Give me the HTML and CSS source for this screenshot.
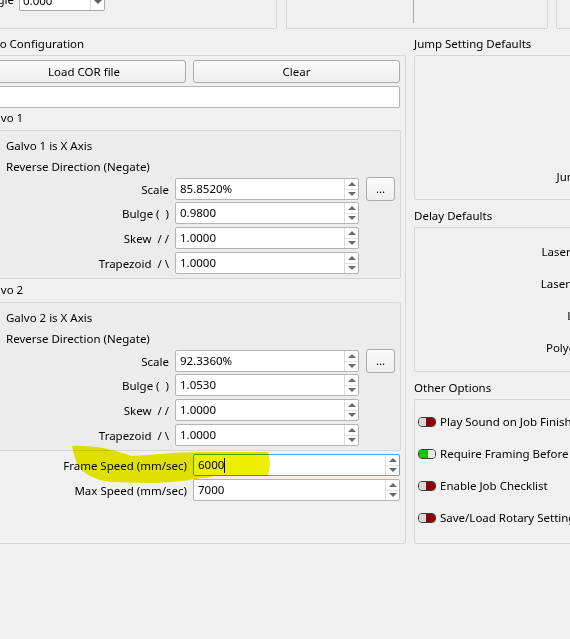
FILE: index.html
```html
<!DOCTYPE html>
<html>
<head>
<meta charset="utf-8">
<link rel="stylesheet" href="styles.css">
</head>
<body>
<div class="page">
  <div class="toprow">
    <div class="tbox tbox1">
      <div class="trow">
        <span class="tlabel">Angle</span>
        <div class="combo"><span class="ctext">0.000</span><span class="carrow"></span></div>
      </div>
    </div>
    <div class="tbox tbox2"><div class="vline"></div></div>
    <div class="tbox tbox3"></div>
  </div>

  <div class="main">
    <div class="lcol">
      <div class="gtitle">Galvo Configuration</div>
      <div class="frame lframe">
        <div class="btnrow">
          <button class="btn">Load COR file</button>
          <button class="btn">Clear</button>
        </div>
        <div class="textfield"></div>

        <div class="stitle">Galvo 1</div>
        <div class="galvo">
          <div class="check">Galvo 1 is X Axis</div>
          <div class="check">Reverse Direction (Negate)</div>
          <div class="grow">
            <span class="glabel">Scale</span>
            <div class="spin"><span class="stext">85.8520%</span><span class="arrows"><span class="up"></span><span class="down"></span></span></div>
            <button class="btn dots">...</button>
          </div>
          <div class="grow">
            <span class="glabel">Bulge (&nbsp;&nbsp;)</span>
            <div class="spin"><span class="stext">0.9800</span><span class="arrows"><span class="up"></span><span class="down"></span></span></div>
          </div>
          <div class="grow">
            <span class="glabel">Skew &nbsp;/ /</span>
            <div class="spin"><span class="stext">1.0000</span><span class="arrows"><span class="up"></span><span class="down"></span></span></div>
          </div>
          <div class="grow">
            <span class="glabel">Trapezoid &nbsp;/ \</span>
            <div class="spin"><span class="stext">1.0000</span><span class="arrows"><span class="up"></span><span class="down"></span></span></div>
          </div>
        </div>

        <div class="stitle s2">Galvo 2</div>
        <div class="galvo">
          <div class="check">Galvo 2 is X Axis</div>
          <div class="check">Reverse Direction (Negate)</div>
          <div class="grow">
            <span class="glabel">Scale</span>
            <div class="spin"><span class="stext">92.3360%</span><span class="arrows"><span class="up"></span><span class="down"></span></span></div>
            <button class="btn dots">...</button>
          </div>
          <div class="grow">
            <span class="glabel">Bulge (&nbsp;&nbsp;)</span>
            <div class="spin"><span class="stext">1.0530</span><span class="arrows"><span class="up"></span><span class="down"></span></span></div>
          </div>
          <div class="grow">
            <span class="glabel">Skew &nbsp;/ /</span>
            <div class="spin"><span class="stext">1.0000</span><span class="arrows"><span class="up"></span><span class="down"></span></span></div>
          </div>
          <div class="grow">
            <span class="glabel">Trapezoid &nbsp;/ \</span>
            <div class="spin"><span class="stext">1.0000</span><span class="arrows"><span class="up"></span><span class="down"></span></span></div>
          </div>
        </div>

        <div class="srow first">
          <span class="glabel">Frame Speed (mm/sec)</span>
          <div class="spin focus"><span class="stext">6000<span class="caret"></span></span><span class="arrows"><span class="up"></span><span class="down"></span></span></div>
        </div>
        <div class="srow">
          <span class="glabel">Max Speed (mm/sec)</span>
          <div class="spin"><span class="stext">7000</span><span class="arrows"><span class="up"></span><span class="down"></span></span></div>
        </div>
      </div>
    </div>

    <div class="rcol">
      <div class="gtitle">Jump Setting Defaults</div>
      <div class="frame jframe">
        <div class="frow"><span class="flabel">Jump Speed</span></div>
      </div>
      <div class="gtitle gap">Delay Defaults</div>
      <div class="frame dframe">
        <div class="frow"><span class="flabel">Laser On Delay</span></div>
        <div class="frow"><span class="flabel">Laser Off Delay</span></div>
        <div class="frow"><span class="flabel">Line Delay</span></div>
        <div class="frow"><span class="flabel">Polygon Delay</span></div>
      </div>
      <div class="gtitle gap">Other Options</div>
      <div class="frame oframe">
        <div class="orow"><span class="toggle off"><span class="a"></span><span class="b"></span></span><span>Play Sound on Job Finish</span></div>
        <div class="orow"><span class="toggle on"><span class="a"></span><span class="b"></span></span><span>Require Framing Before Start</span></div>
        <div class="orow"><span class="toggle off"><span class="a"></span><span class="b"></span></span><span>Enable Job Checklist</span></div>
        <div class="orow"><span class="toggle off"><span class="a"></span><span class="b"></span></span><span>Save/Load Rotary Settings</span></div>
      </div>
    </div>
  </div>
</div>

<svg class="highlight" width="570" height="639" viewBox="0 0 570 639">
  <path d="M72,446 C92,445 112,449 132,456 C152,455 176,452 200,452 L268,452 L270,464 L268,476 L215,476 C195,479 175,483 150,483 L110,482 C96,480 82,474 77,464 C75,458 73,452 72,446 Z" fill="#eeee00"/>
</svg>
</body>
</html>
```
FILE: styles.css
```css
* { box-sizing: border-box; }
html, body { margin: 0; padding: 0; }
body {
  background: #f0f0f0;
  width: 570px;
  height: 639px;
  overflow: hidden;
  position: relative;
  font-family: "Noto Sans", "Open Sans", sans-serif;
  font-size: 11.5px;
  color: #000;
}
.page { margin-left: -24px; width: 700px; }

/* top boxes */
.toprow { display: flex; }
.tbox {
  height: 41px;
  margin-top: -12px;
  border: 1px solid #d6d6d6;
  border-radius: 2px;
}
.tbox1 { width: 302px; }
.tbox2 { width: 263px; margin-left: 9px; display: flex; }
.tbox3 { width: 120px; margin-left: 8px; }
.vline { width: 1px; height: 34px; margin-left: 126px; background: #a8a8a8; }
.trow { display: grid; grid-template-columns: 37px 86px; column-gap: 5px; align-items: center; height: 22px; }
.tlabel { text-align: right; line-height: 16px; }
.combo {
  height: 22px; background: #fff; border: 1px solid #adadad; border-radius: 2px;
  display: flex; align-items: center;
}
.ctext { flex: 1; padding-left: 3px; }
.carrow { width: 14px; height: 100%; border-left: 1px solid #d8d8d8; display: flex; align-items: center; justify-content: center; }
.carrow::before { content: ""; border-left: 4px solid transparent; border-right: 4px solid transparent; border-top: 4px solid #606060; margin-top: 4px; }

/* main */
.main { display: flex; height: 508px; margin-top: 7px; }
.lcol { width: 430px; display: flex; flex-direction: column; }
.rcol { width: 230px; margin-left: 8px; display: flex; flex-direction: column; }
.gtitle { height: 16px; line-height: 16px; margin-bottom: 3px; white-space: nowrap; }
.gtitle.gap { margin-top: 8px; }
.frame { border: 1px solid #d6d6d6; border-radius: 2px; }
.lframe { flex: 1; padding: 4px 5px 0 5px; }

.btnrow { display: grid; grid-template-columns: 204px 207px; column-gap: 7px; }
.btn {
  height: 23px; margin: 0; padding: 0;
  font: inherit; color: #000;
  background: linear-gradient(#fbfbfb, #eeeeee);
  border: 1px solid #ababab; border-radius: 3px;
}
.textfield { height: 22px; margin-top: 3px; background: #fff; border: 1px solid #b4b4b4; border-radius: 2px; }

.stitle { height: 16px; line-height: 16px; margin-top: 2px; margin-bottom: 4px; padding-left: 1px; }
.stitle.s2 { margin-top: 3px; }
.galvo {
  margin-right: -1px;
  border: 1px solid #d6d6d6; border-radius: 2px;
  background: #ececec;
  padding: 4px 5px 4px 0;
}
.check { height: 21px; line-height: 21px; padding-left: 23px; }
.grow {
  display: grid; grid-template-columns: 1fr 184px 29px; column-gap: 7px;
  align-items: center; height: 22px;
}
.grow + .grow { margin-top: 3px; }
.glabel { text-align: right; white-space: nowrap; margin-right: -1px; }
.spin {
  height: 22px; background: #fff; border: 1px solid #b4b4b4; border-radius: 2px;
  display: flex; align-items: stretch;
}
.spin.focus { border-color: #5aa7e6; }
.stext { flex: 1; padding-left: 4px; line-height: 20px; display: flex; align-items: center; }
.caret { display: inline-block; width: 1px; height: 15px; background: #000; }
.arrows { width: 14px; border-left: 1px solid #dcdcdc; display: flex; flex-direction: column; }
.arrows span { flex: 1; display: flex; align-items: center; justify-content: center; }
.arrows .up { border-bottom: 1px solid #e2e2e2; }
.arrows .up::before { content: ""; border-left: 4px solid transparent; border-right: 4px solid transparent; border-bottom: 4px solid #6a6a6a; }
.arrows .down::before { content: ""; border-left: 4px solid transparent; border-right: 4px solid transparent; border-top: 4px solid #6a6a6a; }
.dots { height: 24px; line-height: 18px; }

.srow { display: grid; grid-template-columns: 1fr 207px; column-gap: 7px; align-items: center; height: 22px; margin-top: 3px; }

/* right frames */
.jframe { height: 146px; display: flex; flex-direction: column; justify-content: flex-end; padding-bottom: 15px; }
.dframe { height: 145px; padding-top: 7px; }
.oframe { height: 146px; padding-top: 6px; padding-left: 3px; }
.frow { display: grid; grid-template-columns: 208px 1fr; height: 32px; align-items: center; }
.jframe .frow { height: 16px; grid-template-columns: 206px 1fr; }
.flabel { text-align: right; white-space: nowrap; }
.orow { height: 32px; display: flex; align-items: center; gap: 4px; white-space: nowrap; }
.toggle {
  display: inline-flex; width: 18px; height: 10px;
  border: 1px solid #3c3c3c; border-radius: 4px; overflow: hidden;
}
.toggle .a, .toggle .b { height: 100%; }
.toggle.off .a { width: 7px; background: #ddd6d6; }
.toggle.off .b { flex: 1; background: #8c0000; }
.toggle.on .a { width: 9px; background: #00cc00; }
.toggle.on .b { flex: 1; background: #e4ece4; }

.highlight { position: absolute; left: 0; top: 0; pointer-events: none; mix-blend-mode: multiply; }
```
